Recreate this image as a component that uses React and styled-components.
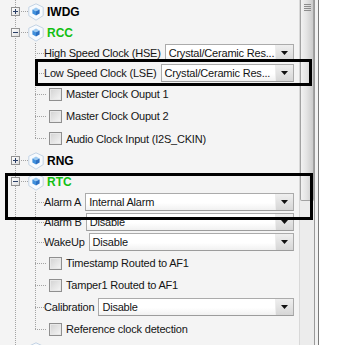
import React from "react";
import styled, { createGlobalStyle } from "styled-components";

const GlobalStyle = createGlobalStyle`
  html, body {
    margin: 0;
    padding: 0;
    background: #fff;
  }
  body {
    font-family: "Liberation Sans", Arial, sans-serif;
  }
`;

const dotV = "repeating-linear-gradient(to bottom, #a3a3a3 0 1px, transparent 1px 2px)";
const dotH = "repeating-linear-gradient(to right, #a3a3a3 0 1px, transparent 1px 2px)";

const Screen = styled.div`
  position: relative;
  display: flex;
  width: 364px;
  height: 345px;
  overflow: hidden;
  background: #fff;
`;

const Panel = styled.div`
  width: 299px;
  flex-shrink: 0;
  background: #f4f4f4;
  overflow: hidden;
`;

const Tree = styled.div`
  display: flex;
  flex-direction: column;
  padding-top: 1px;
  background: ${dotV} 15px 0 / 1px 100% no-repeat;
`;

const HeaderRow = styled.div`
  display: flex;
  align-items: center;
  height: 21px;
  padding-left: 11px;
`;

const Expander = styled.span`
  display: flex;
  width: 9px;
  height: 9px;
  box-sizing: border-box;
  border: 1px solid #929292;
  background: linear-gradient(135deg, #ffffff, #dedede);
`;

const Dash = styled.span`
  width: 7px;
  height: 1px;
  margin-left: 1px;
  background: ${dotH};
`;

const Title = styled.span`
  margin-left: 3px;
  font-size: 12px;
  font-weight: bold;
  color: ${(p) => (p.$active ? "#12bf12" : "#000")};
`;

const Children = styled.div`
  display: flex;
  flex-direction: column;
  padding-left: 35px;
`;

const ChildRow = styled.div`
  display: flex;
  align-items: center;
  height: ${(p) => p.$h}px;
`;

const Connector = styled.span`
  align-self: stretch;
  flex-shrink: 0;
  width: ${(p) => p.$w}px;
  background:
    ${dotH} 0 50% / 100% 1px no-repeat,
    ${dotV} 0 0 / 1px ${(p) => (p.$last ? "50%" : "100%")} no-repeat;
`;

const Label = styled.span`
  font-size: 11px;
  letter-spacing: -0.2px;
  color: #141414;
  white-space: nowrap;
  margin-left: ${(p) => p.$gap || 0}px;
`;

const Select = styled.div`
  flex: 1;
  display: flex;
  height: 18px;
  box-sizing: border-box;
  margin: 0 5px 0 4px;
  border: 1px solid #ababab;
  border-bottom-color: #9c9c9c;
  background: linear-gradient(#ffffff, #ffffff 55%, #f1f1f1);
`;

const SelectText = styled.span`
  flex: 1;
  padding-left: 3px;
  font-size: 11px;
  letter-spacing: -0.2px;
  line-height: 16px;
  color: #141414;
  white-space: nowrap;
  overflow: hidden;
`;

const ArrowBtn = styled.span`
  width: 17px;
  display: flex;
  align-items: center;
  justify-content: center;
  border-left: 1px solid #ededed;
  background: linear-gradient(#efefef, #d6d6d6);
`;

const Check = styled.span`
  width: 13px;
  height: 13px;
  margin-left: 3px;
  flex-shrink: 0;
  box-sizing: border-box;
  border: 1px solid #8f8f8f;
  background: linear-gradient(135deg, #d2d2d2, #f6f6f6);
  box-shadow: inset 0 0 0 1px #e8e8e8;
`;

const ScrollBar = styled.div`
  width: 14px;
  flex-shrink: 0;
  display: flex;
  flex-direction: column;
  background: #ececec;
  border-left: 1px solid #d8d8d8;
`;

const Thumb = styled.div`
  height: 201px;
  box-sizing: border-box;
  border: 1px solid #a2a2a2;
  border-top: none;
  border-radius: 0 0 2px 2px;
  background: linear-gradient(to right, #f2f2f2, #e4e4e4 45%, #cbcbcb);
  display: flex;
  flex-direction: column;
  align-items: center;
  gap: 1px;
  padding-top: 4px;
`;

const Grip = styled.span`
  width: 7px;
  height: 1px;
  background: #8c8c8c;
`;

const Frame = styled.div`
  width: 3px;
  flex-shrink: 0;
  background: #f2f2f2;
  border-left: 1px solid #9a9a9a;
  border-right: 1px solid #7a7a7a;
`;

const Highlight = styled.div`
  position: absolute;
  top: ${(p) => p.$top}px;
  left: ${(p) => p.$left}px;
  width: ${(p) => p.$w}px;
  height: ${(p) => p.$h}px;
  box-sizing: border-box;
  border: 3px solid #000;
  pointer-events: none;
`;

function ExpandIcon({ open }) {
  return (
    <Expander>
      <svg width="7" height="7" viewBox="0 0 7 7">
        <rect x="1" y="3" width="5" height="1" fill="#2a3f66" />
        {!open && <rect x="3" y="1" width="1" height="5" fill="#2a3f66" />}
      </svg>
    </Expander>
  );
}

function CubeIcon() {
  return (
    <svg width="16" height="18" viewBox="0 0 16 18">
      <path d="M8 0.8 L15.2 4.2 V12.6 L8 17.2 L0.8 12.6 V4.2 Z" fill="#f7fafd" stroke="#c3d3e4" strokeWidth="1" />
      <path d="M8 4.6 L11.6 6.4 L8 8.2 L4.4 6.4 Z" fill="#9ccaf2" />
      <path d="M4.4 6.4 L8 8.2 V12.4 L4.4 10.6 Z" fill="#3f8fdc" />
      <path d="M11.6 6.4 L8 8.2 V12.4 L11.6 10.6 Z" fill="#2b70c2" />
    </svg>
  );
}

function DropArrow() {
  return (
    <svg width="7" height="4" viewBox="0 0 7 4">
      <path d="M0 0 H7 L3.5 4 Z" fill="#111" />
    </svg>
  );
}

const nodes = [
  { id: "iwdg", title: "IWDG" },
  {
    id: "rcc",
    title: "RCC",
    open: true,
    children: [
      { type: "select", label: "High Speed Clock (HSE)", value: "Crystal/Ceramic Res..." },
      { type: "select", label: "Low Speed Clock (LSE)", value: "Crystal/Ceramic Res..." },
      { type: "check", label: "Master Clock Ouput 1" },
      { type: "check", label: "Master Clock Ouput 2" },
      { type: "check", label: "Audio Clock Input (I2S_CKIN)", h: 23 },
    ],
  },
  { id: "rng", title: "RNG" },
  {
    id: "rtc",
    title: "RTC",
    open: true,
    children: [
      { type: "select", label: "Alarm A", value: "Internal Alarm" },
      { type: "select", label: "Alarm B", value: "Disable" },
      { type: "select", label: "WakeUp", value: "Disable" },
      { type: "check", label: "Timestamp Routed to AF1" },
      { type: "check", label: "Tamper1 Routed to AF1" },
      { type: "select", label: "Calibration", value: "Disable", h: 22 },
      { type: "check", label: "Reference clock detection" },
    ],
  },
  // next peripheral, only the top of its icon shows at the bottom edge
  { id: "next", title: "" },
];

function Item({ item, last }) {
  if (item.type === "check") {
    return (
      <ChildRow $h={item.h || 22}>
        <Connector $w={11} $last={last} />
        <Check />
        <Label $gap={4}>{item.label}</Label>
      </ChildRow>
    );
  }
  return (
    <ChildRow $h={item.h || 20}>
      <Connector $w={9} $last={last} />
      <Label>{item.label}</Label>
      <Select>
        <SelectText>{item.value}</SelectText>
        <ArrowBtn>
          <DropArrow />
        </ArrowBtn>
      </Select>
    </ChildRow>
  );
}

function Node({ node }) {
  return (
    <>
      <HeaderRow>
        <ExpandIcon open={node.open} />
        <Dash />
        <CubeIcon />
        {node.title && <Title $active={node.open}>{node.title}</Title>}
      </HeaderRow>
      {node.open && (
        <Children>
          {node.children.map((c, i) => (
            <Item key={c.label} item={c} last={i === node.children.length - 1} />
          ))}
        </Children>
      )}
    </>
  );
}

export default function App() {
  return (
    <>
      <GlobalStyle />
      <Screen>
        <Panel>
          <Tree>
            {nodes.map((n) => (
              <Node key={n.id} node={n} />
            ))}
          </Tree>
        </Panel>
        <ScrollBar>
          <Thumb>
            <Grip />
            <Grip />
            <Grip />
            <Grip />
          </Thumb>
        </ScrollBar>
        <Frame />
        <Highlight $top={59} $left={35} $w={277} $h={27} />
        <Highlight $top={173} $left={5} $w={308} $h={47} />
      </Screen>
    </>
  );
}
